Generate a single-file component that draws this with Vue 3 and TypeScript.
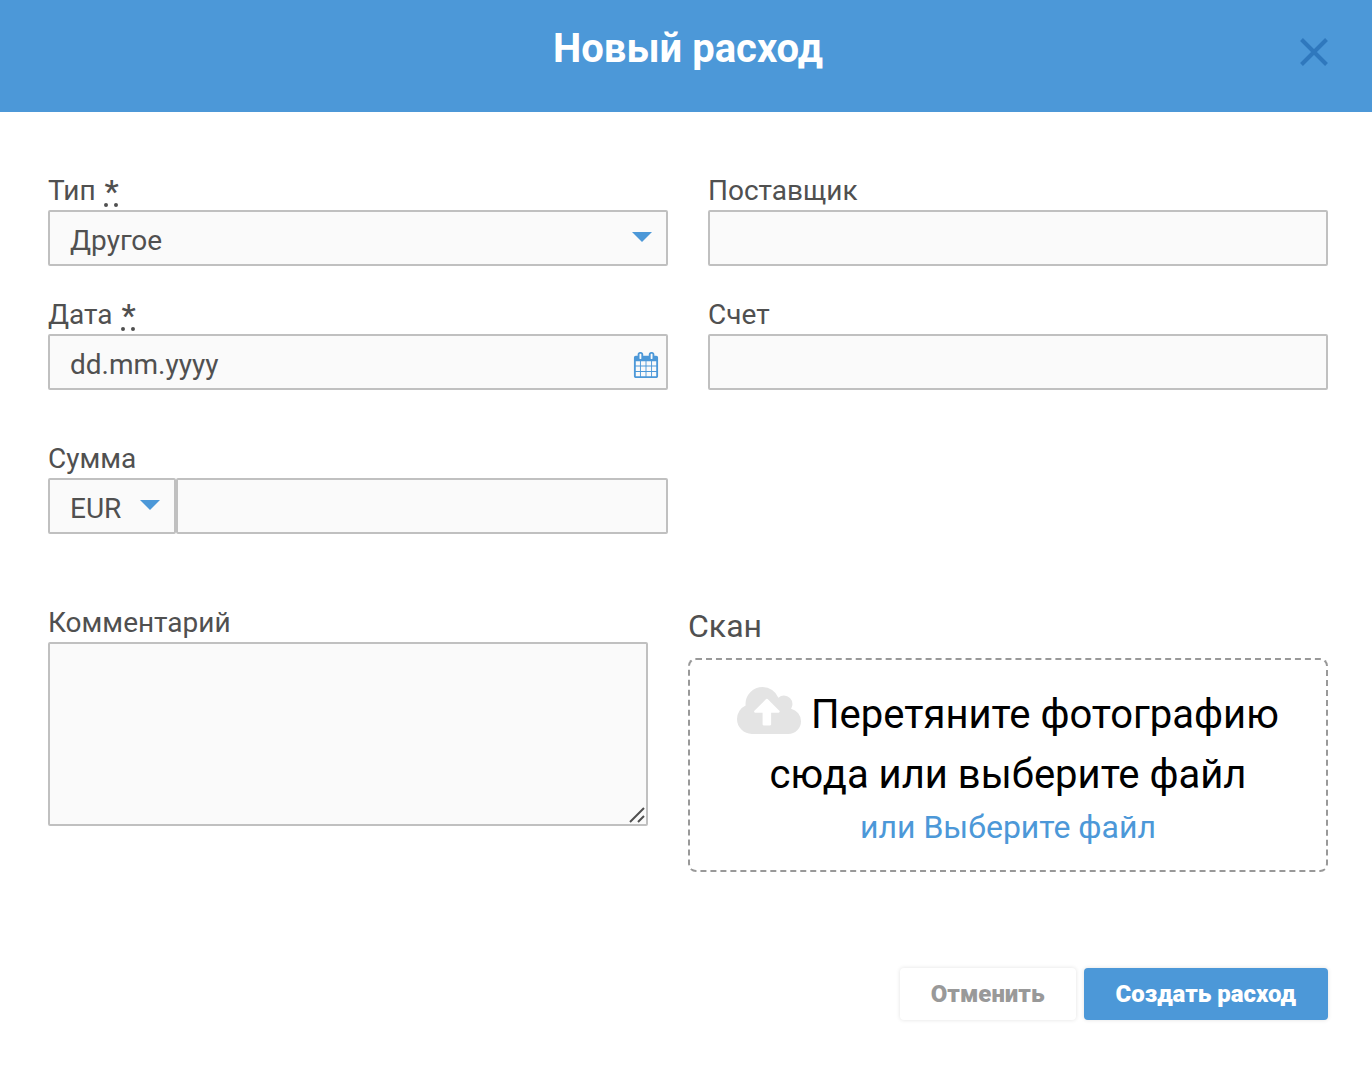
<script setup lang="ts">
import { ref } from 'vue'

const type = ref('Другое')
const currency = ref('EUR')
const supplier = ref('')
const invoice = ref('')
const date = ref('')
const amount = ref('')
const comment = ref('')
</script>

<template>
  <div class="dialog" role="dialog" aria-labelledby="dialog-title">
    <header class="header">
      <h1 id="dialog-title" class="title">Новый расход</h1>
      <button class="close" type="button" aria-label="Закрыть">
        <svg viewBox="0 0 28 28" width="28" height="28" aria-hidden="true">
          <path d="M1.5 1.5L26.5 26.5M26.5 1.5L1.5 26.5" fill="none" stroke="#2f78bd" stroke-width="4" />
        </svg>
      </button>
    </header>

    <form class="form" @submit.prevent>
      <div class="fields">
        <div class="field">
          <label class="label" for="type">Тип <abbr class="required">*</abbr></label>
          <div class="control">
            <select id="type" v-model="type" class="input">
              <option>Другое</option>
            </select>
            <svg class="arrow" viewBox="0 0 20 10" width="20" height="10" aria-hidden="true"><path d="M0 0H20L10 10Z" /></svg>
          </div>
        </div>
        <div class="field">
          <label class="label" for="supplier">Поставщик</label>
          <input id="supplier" v-model="supplier" class="input" type="text" />
        </div>
        <div class="field">
          <label class="label" for="date">Дата <abbr class="required">*</abbr></label>
          <div class="control">
            <input id="date" v-model="date" class="input" type="text" placeholder="dd.mm.yyyy" />
            <svg class="calendar" viewBox="0 0 1792 1792" width="26" height="26" aria-hidden="true">
              <path d="M192 1664h288v-288h-288v288zm352 0h320v-288h-320v288zm-352-352h288v-320h-288v320zm352 0h320v-320h-320v320zm-352-384h288v-288h-288v288zm736 736h320v-288h-320v288zm-384-736h320v-288h-320v288zm768 736h288v-288h-288v288zm-384-352h320v-320h-320v320zm-352-864v-288q0-13-9.5-22.5t-22.5-9.5h-64q-13 0-22.5 9.5t-9.5 22.5v288q0 13 9.5 22.5t22.5 9.5h64q13 0 22.5-9.5t9.5-22.5zm736 864h288v-320h-288v320zm-384-384h320v-288h-320v288zm384 0h288v-288h-288v288zm32-480v-288q0-13-9.5-22.5t-22.5-9.5h-64q-13 0-22.5 9.5t-9.5 22.5v288q0 13 9.5 22.5t22.5 9.5h64q13 0 22.5-9.5t9.5-22.5zm384-64v1280q0 52-38 90t-90 38h-1408q-52 0-90-38t-38-90v-1280q0-52 38-90t90-38h128v-96q0-66 47-113t113-47h64q66 0 113 47t47 113v96h384v-96q0-66 47-113t113-47h64q66 0 113 47t47 113v96h128q52 0 90 38t38 90z" />
            </svg>
          </div>
        </div>
        <div class="field">
          <label class="label" for="invoice">Счет</label>
          <input id="invoice" v-model="invoice" class="input" type="text" />
        </div>
        <div class="field sum">
          <label class="label" for="amount">Сумма</label>
          <div class="money">
            <div class="control currency">
              <select v-model="currency" class="input" aria-label="Валюта">
                <option>EUR</option>
              </select>
              <svg class="arrow" viewBox="0 0 20 10" width="20" height="10" aria-hidden="true"><path d="M0 0H20L10 10Z" /></svg>
            </div>
            <input id="amount" v-model="amount" class="input" type="text" />
          </div>
        </div>
      </div>

      <div class="details">
        <div class="field">
          <label class="label" for="comment">Комментарий</label>
          <div class="control">
            <textarea id="comment" v-model="comment" class="input comment"></textarea>
            <svg class="grip" viewBox="0 0 16 16" width="16" height="16" aria-hidden="true">
              <path d="M1 15L15 1M9 15L15 9" fill="none" stroke="#505050" stroke-width="2" />
            </svg>
          </div>
        </div>
        <section class="scan">
          <h2 class="scan-title">Скан</h2>
          <div class="drop">
            <p class="drop-text">
              <svg class="cloud" viewBox="0 128 1920 1408" width="64" height="47" aria-hidden="true">
                <path d="M1280 864q0-14-9-23l-352-352q-9-9-23-9t-23 9l-351 351q-10 12-10 24 0 14 9 23t23 9h224v352q0 13 9.5 22.5t22.5 9.5h192q13 0 22.5-9.5t9.5-22.5v-352h224q13 0 22.5-9.5t9.5-22.5zm640 288q0 159-112.5 271.5t-271.5 112.5h-1088q-185 0-316.5-131.5t-131.5-316.5q0-130 70-240t188-165q-2-30-2-43 0-212 150-362t362-150q156 0 285.5 87t188.5 231q71-62 166-62 106 0 181 75t75 181q0 76-41 138 130 31 213.5 135.5t83.5 238.5z" />
              </svg>
              Перетяните фотографию сюда или выберите файл
            </p>
            <a class="pick" href="#">или Выберите файл</a>
          </div>
        </section>
      </div>

      <footer class="actions">
        <button class="button" type="button">Отменить</button>
        <button class="button primary" type="submit">Создать расход</button>
      </footer>
    </form>
  </div>
</template>

<style>
body {
  margin: 0;
  background: #fff;
}
</style>

<style scoped>
.dialog,
.dialog * {
  box-sizing: border-box;
}
.dialog {
  font-family: Roboto, "Noto Sans", sans-serif;
  font-size: 28px;
  color: #505050;
}
.header {
  position: relative;
  height: 112px;
  padding: 19px 44px 0 48px;
  background: #4c98d8;
  text-align: center;
}
.title {
  margin: 0;
  font-size: 40px;
  line-height: 60px;
  font-weight: 700;
  color: #fff;
}
.close {
  position: absolute;
  top: 38px;
  right: 44px;
  padding: 0;
  border: 0;
  background: none;
  cursor: pointer;
}
.close svg {
  display: block;
}
.form {
  padding: 58px 44px 46px 48px;
}
.fields {
  display: grid;
  grid-template-columns: 1fr 1fr;
  gap: 28px 40px;
}
.sum {
  margin-top: 20px;
}
.label {
  display: block;
  height: 40px;
  line-height: 42px;
}
.required {
  margin-left: 2px;
  font-size: 32px;
  font-weight: 500;
  line-height: 28px;
  vertical-align: -2px;
  text-decoration: underline dotted 4px;
  text-underline-offset: 1px;
}
.control {
  position: relative;
}
.input {
  display: block;
  width: 100%;
  height: 56px;
  margin: 0;
  padding: 4px 20px 0;
  border: 2px solid #c0c0c0;
  border-radius: 2px;
  background: #fafafa;
  font: inherit;
  color: #505050;
  appearance: none;
  outline: 0;
}
.input::placeholder {
  color: #505050;
  opacity: 1;
}
.arrow,
.calendar {
  position: absolute;
  fill: #4c98d8;
  pointer-events: none;
}
.arrow {
  top: 22px;
  right: 16px;
}
.calendar {
  top: 18px;
  right: 9px;
}
.money {
  display: flex;
}
.currency {
  flex: 0 0 128px;
}
.details {
  display: grid;
  grid-template-columns: 15fr 16fr;
  gap: 40px;
  margin-top: 68px;
}
.comment {
  height: 184px;
  resize: none;
}
.grip {
  position: absolute;
  right: 3px;
  bottom: 3px;
}
.scan-title {
  margin: 0 0 8px;
  font-size: 32px;
  line-height: 48px;
  font-weight: 400;
}
.drop {
  padding: 25px 32px 21px;
  border: 2px dashed #999;
  border-radius: 8px;
  text-align: center;
}
.drop-text {
  margin: 0;
  font-size: 40px;
  line-height: 60px;
  color: #000;
}
.cloud {
  fill: #e4e4e4;
  vertical-align: -6px;
}
.pick {
  display: block;
  font-size: 32px;
  line-height: 44px;
  color: #4c98d8;
  text-decoration: none;
}
.actions {
  display: flex;
  justify-content: flex-end;
  gap: 8px;
  margin-top: 96px;
}
.button {
  height: 52px;
  padding: 0 32px 0 31px;
  border: 0;
  border-radius: 4px;
  background: #fff;
  box-shadow: 0 0 4px rgba(0, 0, 0, 0.12);
  font: inherit;
  font-size: 24px;
  font-weight: 900;
  color: #999;
  cursor: pointer;
}
.primary {
  background: #4c98d8;
  color: #fff;
}
</style>
